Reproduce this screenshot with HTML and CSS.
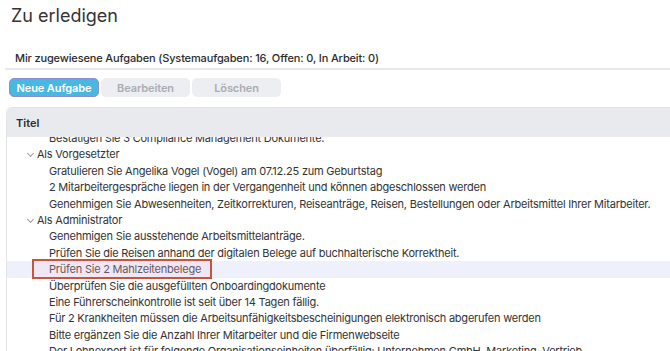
FILE: index.html
```html
<!DOCTYPE html>
<html>
<head>
  <meta name="viewport" content="width=device-width, initial-scale=1">
  <title>Zu erledigen</title>
  <link rel="stylesheet" href="styles.css">
</head>
<body>
  <h1 class="page-title">Zu erledigen</h1>

  <div class="summary">Mir zugewiesene Aufgaben (Systemaufgaben: 16, Offen: 0, In Arbeit: 0)</div>
  <div class="divider"></div>

  <div class="toolbar">
    <button class="btn btn-primary">Neue Aufgabe</button>
    <button class="btn" disabled>Bearbeiten</button>
    <button class="btn" disabled>Löschen</button>
  </div>

  <div class="panel">
    <div class="panel-header">Titel</div>
    <div class="rows">
      <div class="rows-inner">
        <div class="row child">Bestätigen Sie 3 Compliance Management Dokumente.</div>
        <div class="row group"><span class="chevron"></span>Als Vorgesetzter</div>
        <div class="row child">Gratulieren Sie Angelika Vogel (Vogel) am 07.12.25 zum Geburtstag</div>
        <div class="row child">2 Mitarbeitergespräche liegen in der Vergangenheit und können abgeschlossen werden</div>
        <div class="row child">Genehmigen Sie Abwesenheiten, Zeitkorrekturen, Reiseanträge, Reisen, Bestellungen oder Arbeitsmittel Ihrer Mitarbeiter.</div>
        <div class="row group"><span class="chevron"></span>Als Administrator</div>
        <div class="row child">Genehmigen Sie ausstehende Arbeitsmittelanträge.</div>
        <div class="row child">Prüfen Sie die Reisen anhand der digitalen Belege auf buchhalterische Korrektheit.</div>
        <div class="row child selected"><span class="callout"></span>Prüfen Sie 2 Mahlzeitenbelege</div>
        <div class="row child">Überprüfen Sie die ausgefüllten Onboardingdokumente</div>
        <div class="row child">Eine Führerscheinkontrolle ist seit über 14 Tagen fällig.</div>
        <div class="row child">Für 2 Krankheiten müssen die Arbeitsunfähigkeitsbescheinigungen elektronisch abgerufen werden</div>
        <div class="row child">Bitte ergänzen Sie die Anzahl Ihrer Mitarbeiter und die Firmenwebseite</div>
        <div class="row child">Der Lohnexport ist für folgende Organisationseinheiten überfällig: Unternehmen GmbH, Marketing, Vertrieb</div>
      </div>
    </div>
  </div>
</body>
</html>
```

FILE: styles.css
```css
body {
  margin: 0;
  font-family: Inter, "Noto Sans", sans-serif;
  color: #333;
  background: white;
  overflow: hidden;
}

.page-title {
  margin: 0;
  padding: 5px 0 0 11px;
  font-size: 18px;
  font-weight: 400;
  line-height: 22px;
  color: #333;
}

.summary {
  margin-top: 23px;
  padding-left: 15px;
  font-size: 11px;
  font-weight: 500;
  letter-spacing: -0.14px;
  line-height: 16px;
  color: #2b2b2b;
}

.divider {
  margin: 2px 0 0 5px;
  height: 2px;
  background: #e7e8ea;
}

.toolbar {
  display: flex;
  gap: 2px;
  margin: 8px 0 0 9px;
}

.btn {
  width: 89px;
  height: 19px;
  padding: 0;
  border: none;
  border-radius: 5px;
  background: #eceef1;
  color: #a9adb3;
  font-family: inherit;
  font-size: 11px;
  font-weight: 600;
  letter-spacing: -0.1px;
}

.btn-primary {
  width: 90px;
  background: #47b8df;
  color: white;
  border: 1px solid #8e8bd2;
}

.panel {
  margin: 10px 0 0 6px;
  border: 1px solid #e3e4e7;
  border-right: none;
  border-radius: 6px 0 0 6px;
  overflow: hidden;
}

.panel-header {
  height: 29px;
  line-height: 30px;
  padding-left: 9px;
  background: #e9eaee;
  font-size: 11px;
  font-weight: 600;
  color: #2b2b2b;
}

.rows {
  height: 230px;
  overflow: hidden;
}

.rows-inner {
  margin-top: -7px;
}

.row {
  position: relative;
  height: 16.4px;
  line-height: 16.4px;
  font-size: 11px;
  letter-spacing: -0.22px;
  white-space: nowrap;
  color: #333;
}

.child {
  padding-left: 42px;
}

.group {
  padding-left: 30px;
}

.chevron {
  position: absolute;
  left: 21px;
  top: 5px;
  width: 4px;
  height: 4px;
  border-right: 1px solid #9a9ea5;
  border-bottom: 1px solid #9a9ea5;
  transform: rotate(45deg);
}

.selected {
  background: #eef0fb;
}

.callout {
  position: absolute;
  left: 25px;
  top: -2px;
  width: 176px;
  height: 16px;
  border: 2px solid #c9533b;
  background: rgba(250, 200, 220, 0.25);
}
```
